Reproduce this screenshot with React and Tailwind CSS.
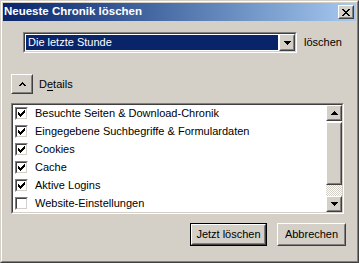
import React from "react";

const CHECK = [
  "......#",
  ".....##",
  "#...###",
  "##.###.",
  "#####..",
  ".###...",
  "..#....",
];

function CheckMark() {
  const cells = [];
  CHECK.forEach((row, y) =>
    row.split("").forEach((c, x) => {
      if (c === "#") cells.push(<rect key={`${x}-${y}`} x={x} y={y} width="1" height="1" />);
    })
  );
  return (
    <svg width="7" height="7" viewBox="0 0 7 7" shapeRendering="crispEdges" fill="#000">
      {cells}
    </svg>
  );
}

function Arrow({ down }) {
  return (
    <svg width="7" height="4" viewBox="0 0 7 4" shapeRendering="crispEdges" fill="#000">
      {down ? (
        <>
          <rect x="0" y="0" width="7" height="1" />
          <rect x="1" y="1" width="5" height="1" />
          <rect x="2" y="2" width="3" height="1" />
          <rect x="3" y="3" width="1" height="1" />
        </>
      ) : (
        <>
          <rect x="3" y="0" width="1" height="1" />
          <rect x="2" y="1" width="3" height="1" />
          <rect x="1" y="2" width="5" height="1" />
          <rect x="0" y="3" width="7" height="1" />
        </>
      )}
    </svg>
  );
}

function Raised({ className = "", children }) {
  return (
    <div className={`border border-t-white border-l-white border-r-[#404040] border-b-[#404040] bg-[#D4D0C8] ${className}`}>
      <div className="w-full h-full border border-t-[#D4D0C8] border-l-[#D4D0C8] border-r-[#808080] border-b-[#808080] flex items-center justify-center">
        {children}
      </div>
    </div>
  );
}

function Sunken({ className = "", innerClass = "", children }) {
  return (
    <div className={`border border-t-[#808080] border-l-[#808080] border-r-white border-b-white ${className}`}>
      <div className={`w-full h-full border border-t-[#404040] border-l-[#404040] border-r-[#D4D0C8] border-b-[#D4D0C8] ${innerClass}`}>
        {children}
      </div>
    </div>
  );
}

function CheckRow({ label, checked }) {
  return (
    <div className="h-[18px] flex items-center pl-[2px]">
      <Sunken className="w-[13px] h-[13px] shrink-0" innerClass="bg-white flex items-center justify-center">
        {checked && <CheckMark />}
      </Sunken>
      <span className="ml-[7px] text-[11px] text-black leading-none whitespace-nowrap">{label}</span>
    </div>
  );
}

export default function App() {
  const items = [
    ["Besuchte Seiten & Download-Chronik", true],
    ["Eingegebene Suchbegriffe & Formulardaten", true],
    ["Cookies", true],
    ["Cache", true],
    ["Aktive Logins", true],
    ["Website-Einstellungen", false],
  ];

  return (
    <div className="w-[359px] h-[263px] font-['Liberation_Sans',Arial,sans-serif] border border-t-[#D4D0C8] border-l-[#D4D0C8] border-r-[#404040] border-b-[#404040] bg-[#D4D0C8] overflow-hidden">
      <div className="w-full h-full border border-t-white border-l-white border-r-[#808080] border-b-[#808080] p-px flex flex-col">
        {/* Title bar */}
        <div className="h-[18px] shrink-0 flex items-center justify-between pl-[1px] pr-[2px] bg-gradient-to-r from-[#0A246A] to-[#A6CAF0]">
          <span className="text-white font-bold text-[11.5px] leading-none">Neueste Chronik löschen</span>
          <Raised className="w-[16px] h-[14px]">
            <svg width="8" height="7" viewBox="0 0 8 7" shapeRendering="crispEdges" fill="#000">
              <rect x="0" y="0" width="2" height="1" /><rect x="6" y="0" width="2" height="1" />
              <rect x="1" y="1" width="2" height="1" /><rect x="5" y="1" width="2" height="1" />
              <rect x="2" y="2" width="4" height="1" />
              <rect x="3" y="3" width="2" height="1" />
              <rect x="2" y="4" width="4" height="1" />
              <rect x="1" y="5" width="2" height="1" /><rect x="5" y="5" width="2" height="1" />
              <rect x="0" y="6" width="2" height="1" /><rect x="6" y="6" width="2" height="1" />
            </svg>
          </Raised>
        </div>

        {/* Time range */}
        <div className="mt-[11px] ml-[20px] flex items-center">
          <Sunken className="w-[274px] h-[21px]" innerClass="bg-white flex">
            <div className="flex-1 m-px bg-[#0A246A] flex items-center pl-[2px]">
              <span className="text-white text-[11px] leading-none">Die letzte Stunde</span>
            </div>
            <Raised className="w-[16px] h-full">
              <Arrow down />
            </Raised>
          </Sunken>
          <span className="ml-[7px] text-[11px] text-black leading-none">löschen</span>
        </div>

        {/* Details toggle */}
        <div className="mt-[21px] ml-[8px] flex items-center">
          <Raised className="w-[22px] h-[20px]">
            <svg width="7" height="4" viewBox="0 0 7 4" shapeRendering="crispEdges" fill="#000">
              <rect x="3" y="0" width="1" height="1" />
              <rect x="2" y="1" width="3" height="1" />
              <rect x="1" y="2" width="2" height="1" /><rect x="4" y="2" width="2" height="1" />
              <rect x="0" y="3" width="2" height="1" /><rect x="5" y="3" width="2" height="1" />
            </svg>
          </Raised>
          <span className="ml-[6px] text-[11px] text-black leading-none">
            D<span className="underline underline-offset-2">e</span>tails
          </span>
        </div>

        {/* Items list */}
        <Sunken className="mt-[9px] ml-[8px] w-[333px] h-[111px]" innerClass="bg-white flex">
          <div className="flex-1 flex flex-col">
            {items.map(([label, checked]) => (
              <CheckRow key={label} label={label} checked={checked} />
            ))}
          </div>
          <div className="w-[16px] h-full flex flex-col">
            <Raised className="w-[16px] h-[16px] shrink-0">
              <Arrow />
            </Raised>
            <Raised className="w-[16px] h-[63px] shrink-0 mt-px" />
            <div className="flex-1 bg-[repeating-conic-gradient(#D4D0C8_0%_25%,#ffffff_0%_50%)] bg-[length:2px_2px]" />
            <Raised className="w-[16px] h-[16px] shrink-0">
              <Arrow down />
            </Raised>
          </div>
        </Sunken>

        {/* Action buttons */}
        <div className="mt-[9px] flex justify-end pr-[10px] gap-[10px]">
          <div className="w-[77px] h-[23px] border border-black">
            <Raised className="w-full h-full">
              <span className="text-[11px] text-black leading-none">Jetzt löschen</span>
            </Raised>
          </div>
          <Raised className="w-[69px] h-[23px]">
            <span className="text-[11px] text-black leading-none">Abbrechen</span>
          </Raised>
        </div>
      </div>
    </div>
  );
}
